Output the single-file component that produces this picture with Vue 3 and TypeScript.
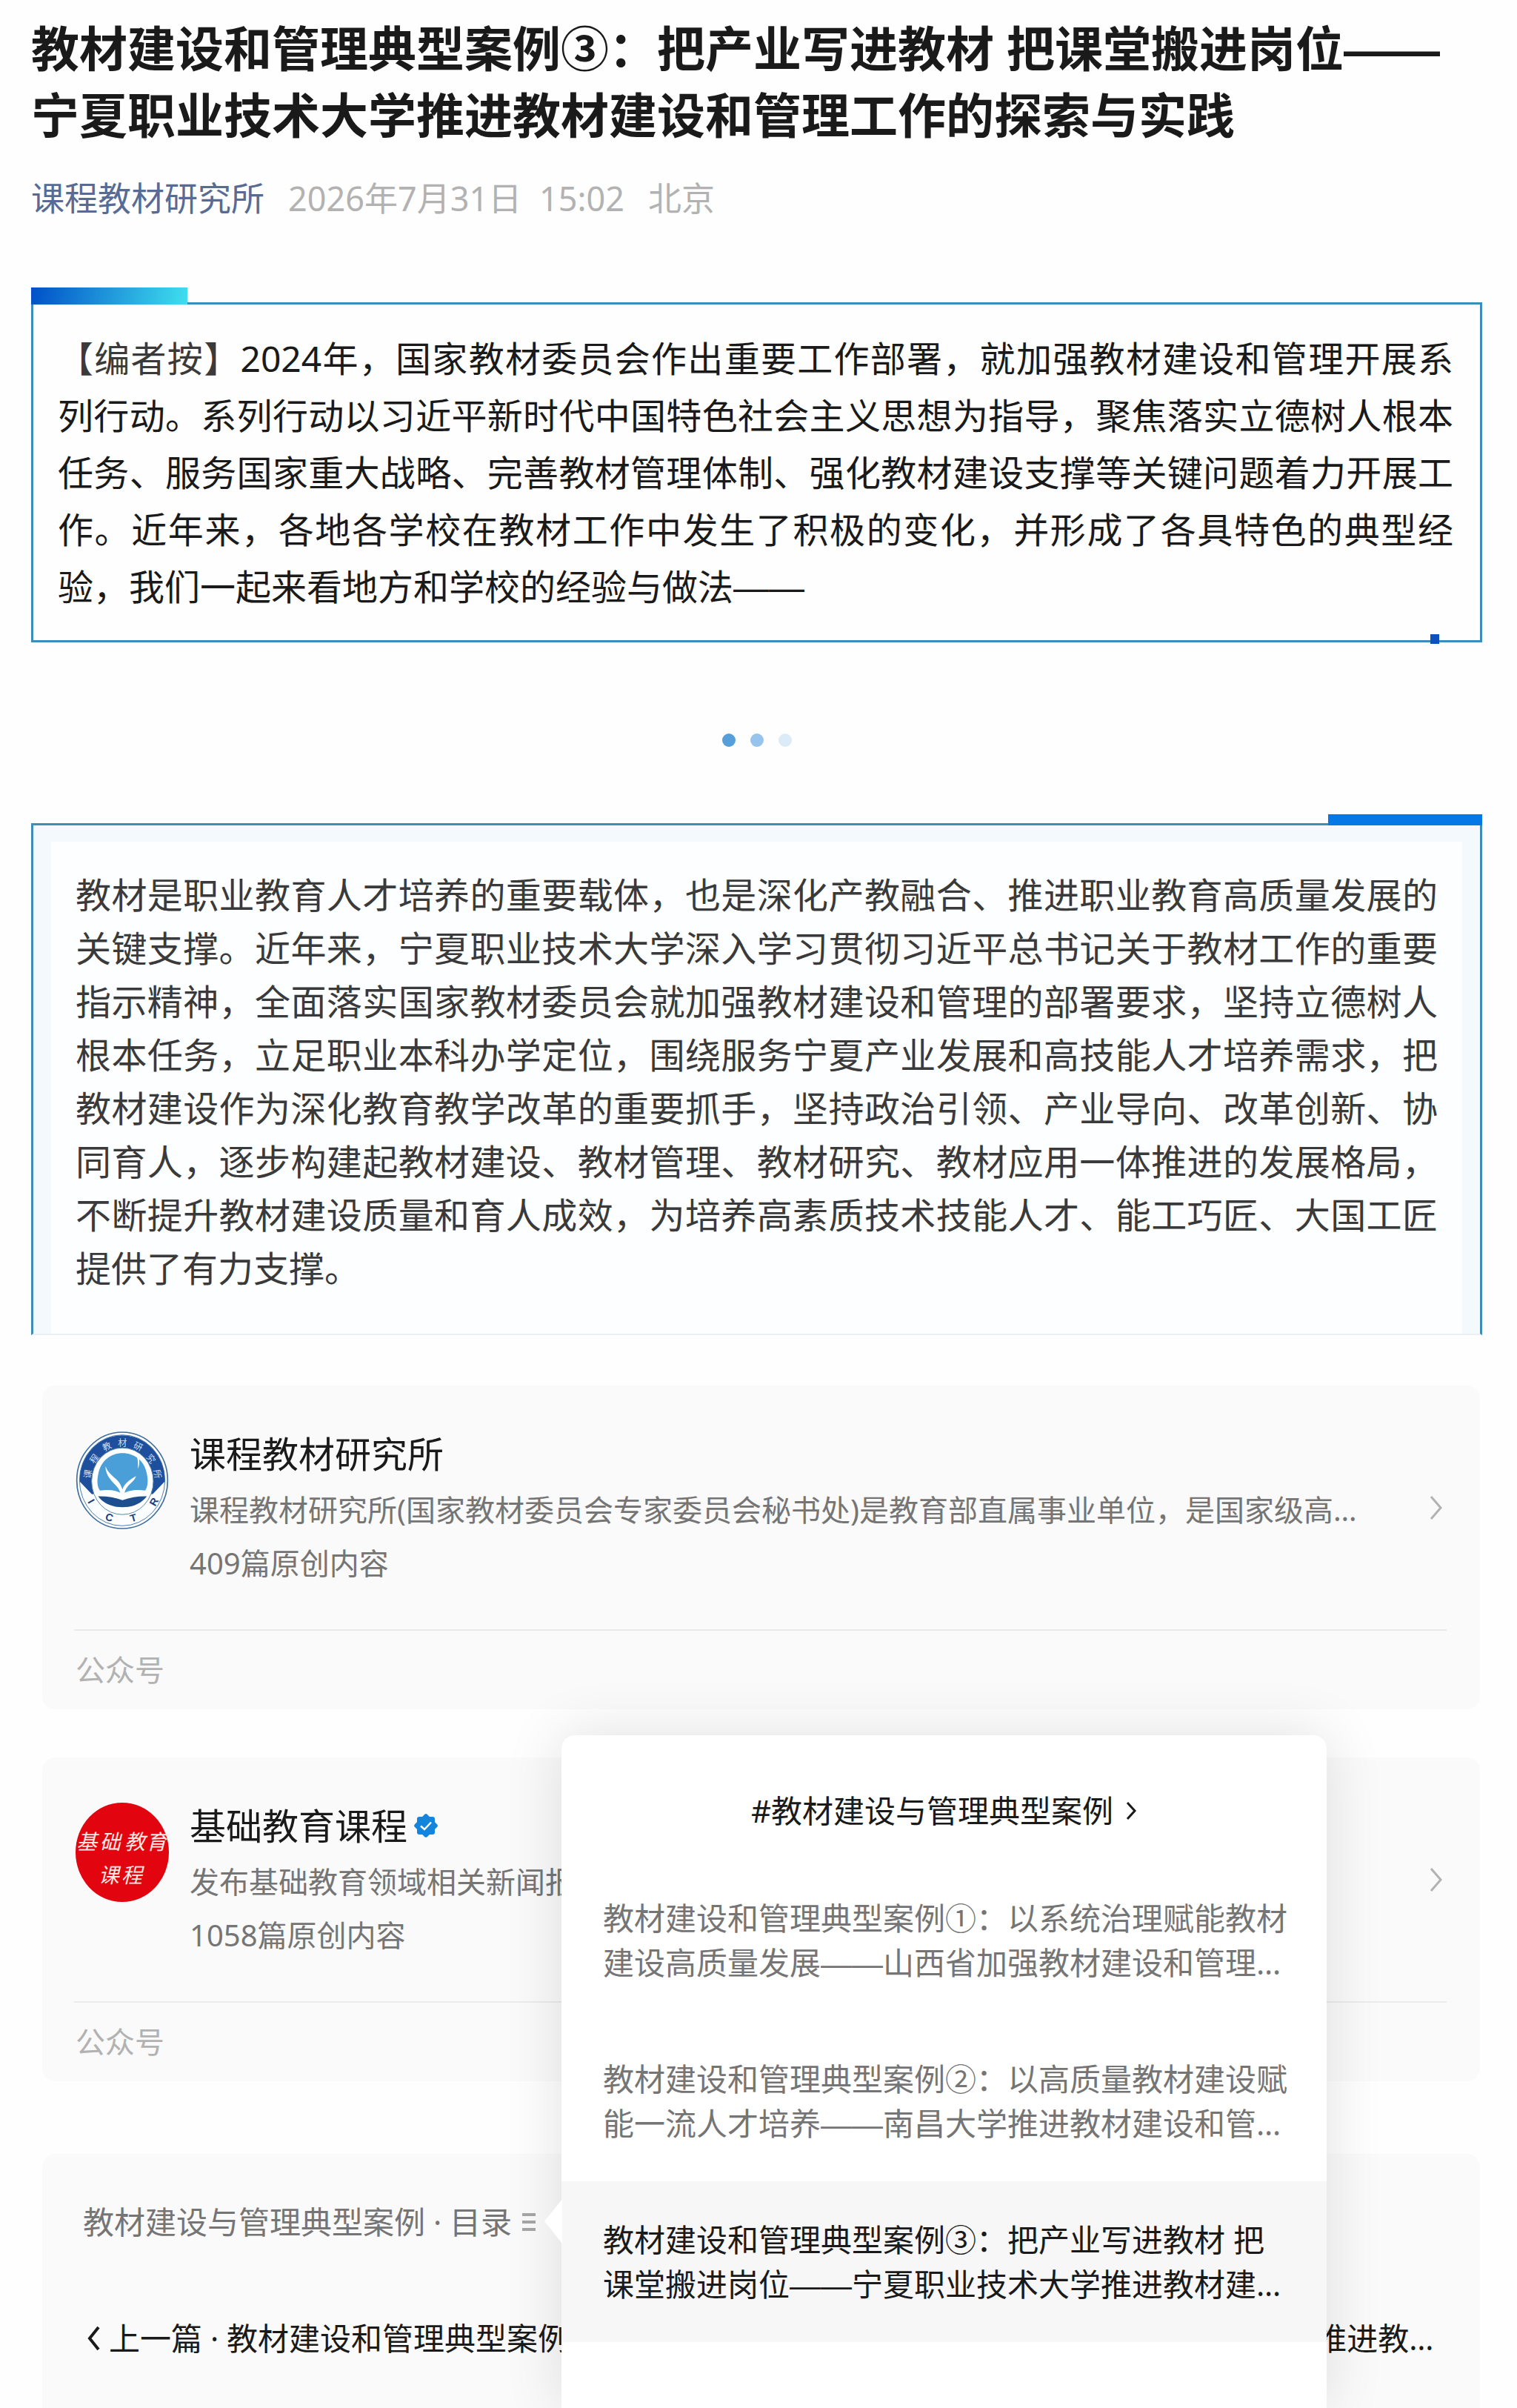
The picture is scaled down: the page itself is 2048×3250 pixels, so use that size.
<script setup lang="ts">
interface Account {
  id: string
  name: string
  intro: string
  count: string
  verified: boolean
}

interface Entry {
  id: number
  title: string
  current: boolean
}

const accounts: Account[] = [
  {
    id: 'ictr',
    name: '课程教材研究所',
    intro: '课程教材研究所(国家教材委员会专家委员会秘书处)是教育部直属事业单位，是国家级高端智库和教材研究机构。',
    count: '409篇原创内容',
    verified: false,
  },
  {
    id: 'jcjykc',
    name: '基础教育课程',
    intro: '发布基础教育领域相关新闻报道',
    count: '1058篇原创内容',
    verified: true,
  },
]

const entries: Entry[] = [
  { id: 1, title: '教材建设和管理典型案例①：以系统治理赋能教材建设高质量发展——山西省加强教材建设和管理工作的探索与实践', current: false },
  { id: 2, title: '教材建设和管理典型案例②：以高质量教材建设赋能一流人才培养——南昌大学推进教材建设和管理工作的探索与实践', current: false },
  { id: 3, title: '教材建设和管理典型案例③：把产业写进教材 把课堂搬进岗位——宁夏职业技术大学推进教材建设和管理工作的探索与实践', current: true },
]

const ringText = [
  { c: '课', x: 112, y: 267, r: -80 },
  { c: '程', x: 139, y: 204, r: -54 },
  { c: '教', x: 191, y: 153, r: -26 },
  { c: '材', x: 256, y: 139, r: 0 },
  { c: '研', x: 321, y: 153, r: 26 },
  { c: '究', x: 374, y: 204, r: 54 },
  { c: '所', x: 401, y: 267, r: 80 },
]

const ringLetters = [
  { c: 'I', x: 130, y: 378, r: 60 },
  { c: 'C', x: 203, y: 443, r: 18 },
  { c: 'T', x: 300, y: 445, r: -16 },
  { c: 'R', x: 383, y: 380, r: -60 },
]

// Splits a title so that each double dash can be set in a face with full-width dashes.
const pieces = (text: string): string[] => text.split(/(——)/)
</script>

<template>
  <main class="page">
    <header>
      <h1 class="title">教材建设和管理典型案例③：把产业写进教材 把课堂搬进岗位<span class="dash">——</span>宁夏职业技术大学推进教材建设和管理工作的探索与实践</h1>
      <div class="meta">
        <a class="author" href="#author">课程教材研究所</a>
        <time datetime="2026-07-31T15:02">2026年7月31日 <span class="clock">15:02</span></time>
        <span>北京</span>
      </div>
    </header>

    <section class="note">
      <p><span class="lead">【编者按】</span>2024年，国家教材委员会作出重要工作部署，就加强教材建设和管理开展系列行动。系列行动以习近平新时代中国特色社会主义思想为指导，聚焦落实立德树人根本任务、服务国家重大战略、完善教材管理体制、强化教材建设支撑等关键问题着力开展工作。近年来，各地各学校在教材工作中发生了积极的变化，并形成了各具特色的典型经验，我们一起来看地方和学校的经验与做法<span class="dash">——</span></p>
    </section>

    <div class="dots" aria-hidden="true"><i></i><i></i><i></i></div>

    <section class="summary">
      <div class="summary-inner">
        <p>教材是职业教育人才培养的重要载体，也是深化产教融合、推进职业教育高质量发展的关键支撑。近年来，宁夏职业技术大学深入学习贯彻习近平总书记关于教材工作的重要指示精神，全面落实国家教材委员会就加强教材建设和管理的部署要求，坚持立德树人根本任务，立足职业本科办学定位，围绕服务宁夏产业发展和高技能人才培养需求，把教材建设作为深化教育教学改革的重要抓手，坚持政治引领、产业导向、改革创新、协同育人，逐步构建起教材建设、教材管理、教材研究、教材应用一体推进的发展格局，不断提升教材建设质量和育人成效，为培养高素质技术技能人才、能工巧匠、大国工匠提供了有力支撑。</p>
      </div>
    </section>

    <div class="cards">
      <a v-for="a in accounts" :key="a.id" class="card account" :href="'#' + a.id">
        <div class="profile">
          <svg v-if="a.id === 'ictr'" class="avatar" viewBox="66 94 378 399" aria-hidden="true">
            <defs>
              <clipPath id="upper"><path d="M60 90H450V290L425 300L378 350H132L85 300L60 290Z" /></clipPath>
            </defs>
            <ellipse cx="255" cy="293.500" rx="184" ry="195" fill="#fff" stroke="#3f6f9f" stroke-width="5" />
            <ellipse cx="255" cy="293.500" rx="173" ry="184" fill="#fbfdff" stroke="#4a7fb5" stroke-width="3" />
            <ellipse cx="255" cy="293" rx="172" ry="182" fill="#1d4f9c" clip-path="url(#upper)" />
            <ellipse cx="256" cy="297" rx="125" ry="135" fill="#fdffff" stroke="#5c87a8" stroke-width="3" />
            <path d="M165 335C152 318 153 290 158 268C168 214 208 183 256 183C305 183 346 214 355 268C360 292 360 318 348 335C315 330 280 333 256 349C232 333 200 330 165 335Z" fill="#4a9fd9" />
            <path d="M187 236C196 262 218 277 236 294C248 306 251 318 256 330C262 308 286 290 311 276C304 302 268 312 264 349H248C244 310 188 296 187 236Z" fill="#fff" />
            <path d="M311 188C326 196 328 222 319 247C319 228 320 210 311 188Z" fill="#fff" />
            <path d="M157 358C190 357 226 362 256 374C288 362 322 357 355 358C330 389 298 402 256 402C213 402 181 388 157 358Z" fill="#1d4f8f" />
            <text v-for="t in ringText" :key="t.c" class="ring-cn" :x="t.x" :y="t.y" :transform="`rotate(${t.r} ${t.x} ${t.y})`">{{ t.c }}</text>
            <text v-for="t in ringLetters" :key="t.c" class="ring-en" :x="t.x" :y="t.y" :transform="`rotate(${t.r} ${t.x} ${t.y})`">{{ t.c }}</text>
          </svg>
          <svg v-else class="avatar" viewBox="66 98 378 402" aria-hidden="true">
            <ellipse cx="255" cy="299" rx="189" ry="201" fill="#e2040f" />
            <g class="brush">
              <text x="112" y="252">基</text>
              <text x="206" y="252">础</text>
              <text x="306" y="252">教</text>
              <text x="394" y="252">育</text>
              <text x="200" y="386">课</text>
              <text x="294" y="386">程</text>
            </g>
          </svg>
          <div class="info">
            <div class="name">
              {{ a.name }}
              <svg v-if="a.verified" class="badge" viewBox="0 0 34 34" aria-hidden="true">
                <g fill="#1485dc">
                  <rect x="5" y="5" width="24" height="24" rx="3" />
                  <rect x="5" y="5" width="24" height="24" rx="3" transform="rotate(45 17 17)" />
                </g>
                <path d="M10 17.500L15 22L24 12.500" fill="none" stroke="#fff" stroke-width="2.500" />
              </svg>
            </div>
            <div class="intro">{{ a.intro }}</div>
            <div class="intro">{{ a.count }}</div>
          </div>
          <svg class="chevron" viewBox="0 0 18 34" aria-hidden="true">
            <path d="M2 2L15 17L2 32" fill="none" stroke="#b2b2b2" stroke-width="3" />
          </svg>
        </div>
        <div class="kind">公众号</div>
      </a>
    </div>

    <nav class="card series">
      <a class="catalog" href="#catalog">
        教材建设与管理典型案例 · 目录
        <svg viewBox="0 0 18 26" aria-hidden="true">
          <path d="M0 3H18M0 13H18M0 23H18" fill="none" stroke="#a6a6a6" stroke-width="4" />
        </svg>
      </a>
      <a class="prev" href="#prev">
        <svg viewBox="0 0 18 34" aria-hidden="true">
          <path d="M16 2L4 17L16 32" fill="none" stroke="#1a1a1a" stroke-width="4" />
        </svg>
        <span class="prev-text">上一篇 · <span v-for="(p, i) in pieces(entries[1].title)" :key="i" :class="{ dash: p === '——' }">{{ p }}</span></span>
      </a>

      <div class="popover">
        <a class="popover-title" href="#album">
          #教材建设与管理典型案例
          <svg viewBox="0 0 16 26" aria-hidden="true">
            <path d="M3 2L13 13L3 24" fill="none" stroke="#1a1a1a" stroke-width="3" />
          </svg>
        </a>
        <a v-for="e in entries" :key="e.id" class="entry" :class="{ current: e.current }" :href="'#case' + e.id">
          <span class="entry-text"><span v-for="(p, i) in pieces(e.title)" :key="i" :class="{ dash: p === '——' }">{{ p }}</span></span>
        </a>
      </div>
    </nav>
  </main>
</template>

<style>
body {
  margin: 0;
  background: #fefefe;
}
</style>

<style scoped>
.page {
  display: flex;
  flex-direction: column;
  box-sizing: border-box;
  min-height: 100vh;
  padding: 20px 47px 0 42px;
  overflow: hidden;
  font-family: "Noto Sans", "Noto Sans CJK SC", sans-serif;
  color: #1a1a1a;
  text-spacing-trim: space-all;
}

a {
  color: inherit;
  text-decoration: none;
}

p {
  margin: 0;
  text-align: justify;
}

.dash {
  font-family: "Liberation Sans", "Noto Sans CJK SC", sans-serif;
  line-height: 1;
}

.title {
  margin: 0;
  font-size: 65px;
  line-height: 90px;
  font-weight: 700;
}

.meta {
  display: flex;
  gap: 32px;
  margin-top: 38px;
  font-size: 45px;
  line-height: 60px;
  color: #b2b2b2;
}

.author {
  color: #576b95;
}

.clock {
  margin-left: 12px;
}

.note {
  position: relative;
  margin-top: 110px;
  padding: 34px 36px 34px 33px;
  border: 3px solid #3c8db8;
  font-size: 48px;
  line-height: 77px;
}

.note::before {
  content: "";
  position: absolute;
  top: -23px;
  left: -3px;
  width: 211px;
  height: 23px;
  background: linear-gradient(100deg, #0050c8, #3fdfee);
}

.note::after {
  content: "";
  position: absolute;
  right: 55px;
  bottom: -5px;
  width: 12px;
  height: 13px;
  background: #0d50be;
}

.lead {
  color: #3a3a3a;
}

.dots {
  display: flex;
  justify-content: center;
  gap: 20px;
  margin: 123px 0 103px;
}

.dots i {
  width: 18px;
  height: 18px;
  border-radius: 50%;
  background: #579fd9;
}

.dots i:nth-child(2) {
  background: #96c4ec;
}

.dots i:nth-child(3) {
  background: #dcebf8;
}

.summary {
  position: relative;
  padding: 22px 24px 0;
  border: 3px solid #3c8db8;
  border-bottom: 2px solid #eceff2;
  background: #f3f9fd;
  color: #3a3a3a;
  font-size: 48px;
  line-height: 72px;
}

.summary::before {
  content: "";
  position: absolute;
  top: -15px;
  right: -3px;
  width: 208px;
  height: 15px;
  background: #0678e6;
}

.summary-inner {
  padding: 36px 33px 52px;
  background: #fcfeff;
}

.cards {
  display: flex;
  flex-direction: column;
  gap: 65px;
  margin-top: 68px;
}

.card {
  margin: 0 3px 0 15px;
  border-radius: 18px;
  background: #fafafa;
}

.account {
  display: block;
  padding: 57px 45px 0 43px;
}

.profile {
  display: flex;
  align-items: flex-start;
  padding: 0 5px 53px 2px;
  border-bottom: 2px solid #ebebeb;
}

.avatar {
  flex: none;
  width: 126px;
  height: 134px;
  margin: 4px 28px 0 0;
  overflow: visible;
}

.ring-cn {
  font-family: "Noto Sans CJK SC", sans-serif;
  font-size: 36px;
  fill: #c8dcf2;
  text-anchor: middle;
  dominant-baseline: central;
}

.ring-en {
  font-family: "Liberation Sans", sans-serif;
  font-size: 42px;
  font-weight: 700;
  fill: #1d3f7c;
  text-anchor: middle;
  dominant-baseline: central;
}

.brush {
  font-family: "Noto Sans CJK SC", sans-serif;
  font-size: 84px;
  font-style: italic;
  fill: #fde8e4;
  text-anchor: middle;
  dominant-baseline: central;
}

.info {
  flex: 1;
  min-width: 0;
}

.name {
  display: flex;
  align-items: center;
  gap: 8px;
  margin-bottom: 5px;
  font-size: 49px;
  line-height: 70px;
}

.badge {
  width: 34px;
  height: 34px;
}

.intro {
  overflow: hidden;
  font-size: 40px;
  line-height: 72px;
  color: #757575;
  white-space: nowrap;
  text-overflow: ellipsis;
}

.chevron {
  flex: none;
  width: 18px;
  height: 34px;
  margin: 91px 0 0 70px;
}

.kind {
  padding-left: 2px;
  font-size: 40px;
  line-height: 106px;
  color: #b2b2b2;
}

.series {
  position: relative;
  flex: 1;
  margin-top: 98px;
  padding: 62px 57px 64px 55px;
  border-radius: 18px 18px 0 0;
  font-size: 42px;
  line-height: 60px;
}

.catalog {
  display: flex;
  align-items: center;
  gap: 14px;
  color: #757575;
}

.catalog svg {
  width: 18px;
  height: 26px;
}

.prev {
  display: flex;
  align-items: center;
  gap: 12px;
  margin-top: 97px;
  padding-left: 5px;
}

.prev svg {
  flex: none;
  width: 18px;
  height: 34px;
}

.prev-text {
  overflow: hidden;
  white-space: nowrap;
  text-overflow: ellipsis;
}

.popover {
  position: absolute;
  top: -565px;
  bottom: 0;
  left: 701px;
  width: 1033px;
  border-radius: 18px 18px 0 0;
  background: #fff;
  box-shadow: 0 0 80px rgba(0, 0, 0, 0.12);
}

.popover::before {
  content: "";
  position: absolute;
  top: 626px;
  left: -23px;
  width: 24px;
  height: 60px;
  background: #fff;
  clip-path: polygon(100% 0, 0 50%, 100% 100%);
}

.popover-title {
  display: flex;
  align-items: center;
  justify-content: center;
  gap: 16px;
  padding: 72px 0 36px;
}

.popover-title svg {
  width: 16px;
  height: 26px;
}

.entry {
  display: block;
  padding: 49px 52px 48px 56px;
  color: #757575;
}

.entry.current {
  background: #f7f7f7;
  color: #1a1a1a;
}

.entry-text {
  display: -webkit-box;
  overflow: hidden;
  -webkit-box-orient: vertical;
  -webkit-line-clamp: 2;
}
</style>
